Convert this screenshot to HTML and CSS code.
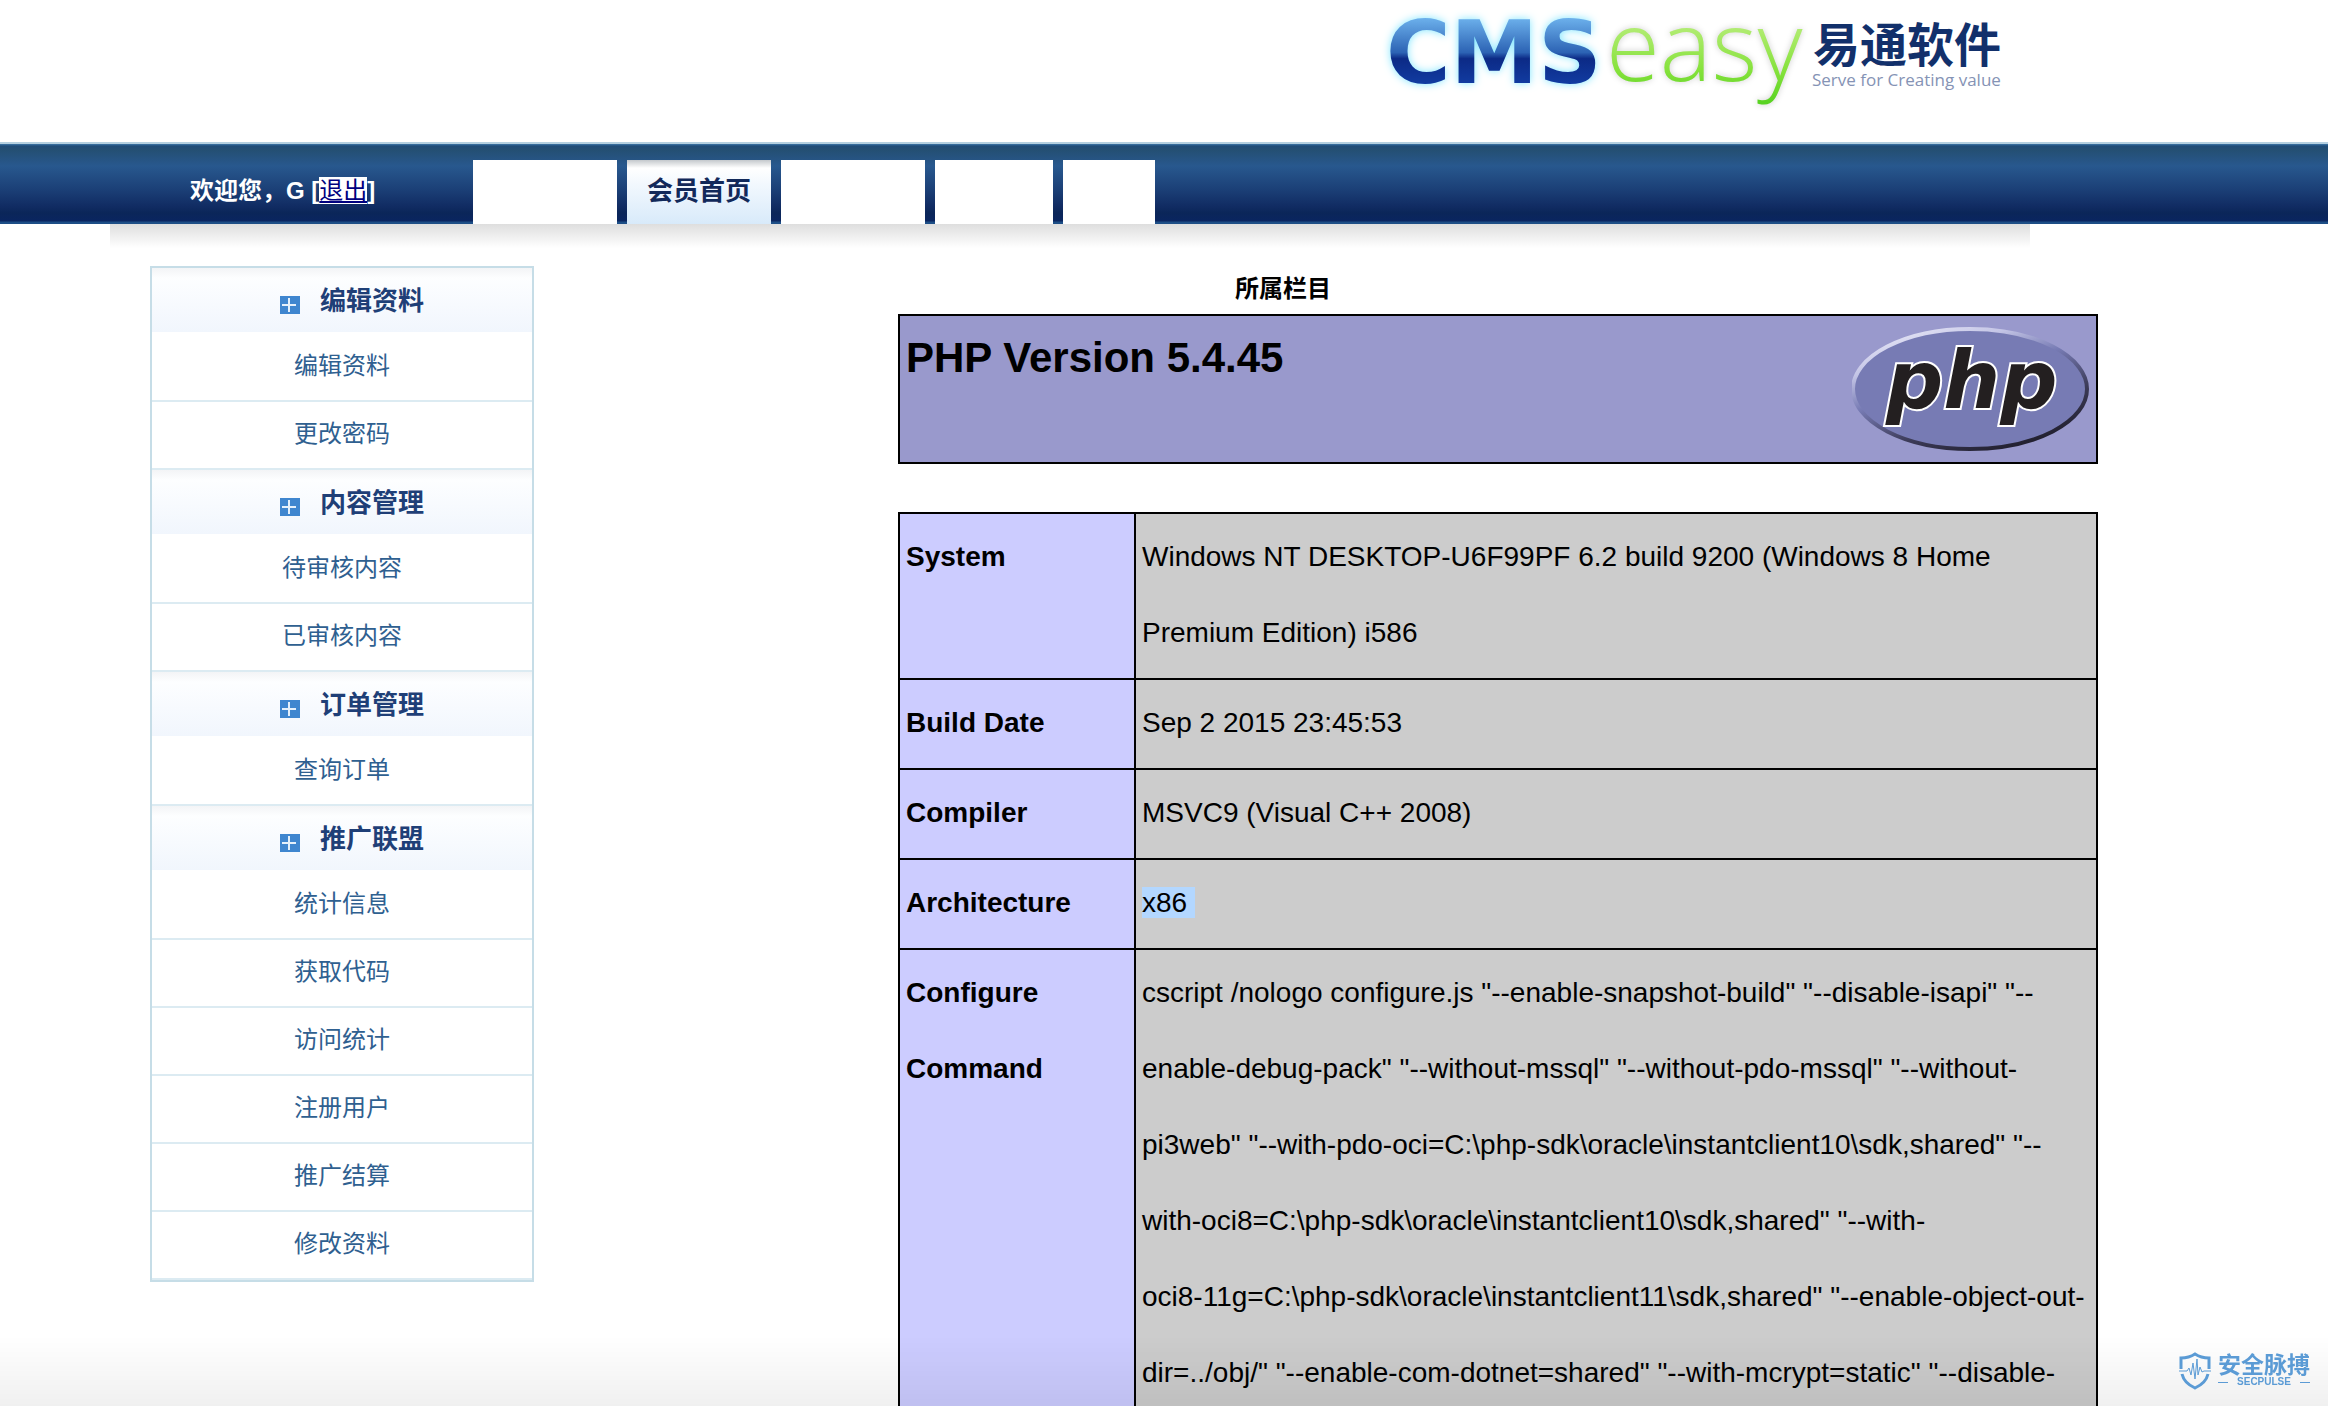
FILE: index.html
```html
<!DOCTYPE html>
<html lang="zh-CN">
<head>
    <meta charset="UTF-8">
    <meta name="viewport" content="width=device-width, initial-scale=1.0">
    <title>会员首页</title>
    <link rel="stylesheet" href="styles.css">
</head>
<body>
    <header class="header">
        <svg class="logo" viewBox="0 0 640 112" role="img" aria-label="CMSeasy 易通软件">
            <defs>
                <linearGradient id="blue" x1="0" y1="0" x2="0" y2="1">
                    <stop offset="0.15" stop-color="#6fb4ee"/>
                    <stop offset="0.5" stop-color="#2c63b4"/>
                    <stop offset="0.56" stop-color="#0c2a86"/>
                    <stop offset="0.85" stop-color="#123fa6"/>
                </linearGradient>
                <linearGradient id="green" x1="0" y1="0" x2="0" y2="1">
                    <stop offset="0.25" stop-color="#c4f08a"/>
                    <stop offset="0.7" stop-color="#86e23c"/>
                    <stop offset="1" stop-color="#4fd01c"/>
                </linearGradient>
            </defs>
            <text class="logo-cms" x="-2" y="83" fill="url(#blue)">CMS</text>
            <text class="logo-easy" x="218" y="81" fill="url(#green)">easy</text>
            <text class="logo-cn" x="425" y="62">易通软件</text>
            <text class="logo-slogan" x="424" y="86">Serve for Creating value</text>
        </svg>
    </header>

    <nav class="nav">
        <div class="welcome">欢迎您，G [<a href="#">退出</a>]</div>
        <ul class="tabs">
            <li class="tab"></li>
            <li class="tab active"><a href="#">会员首页</a></li>
            <li class="tab"></li>
            <li class="tab tab-medium"></li>
            <li class="tab tab-small"></li>
        </ul>
    </nav>
    <div class="nav-shadow"></div>

    <div class="page">
        <aside class="sidebar">
            <h3><svg class="plus" viewBox="0 0 20 18"><path d="M0 0h20v18H0z" fill="#3f86cf"/><path d="M9 2v14M2 9h14" stroke="#e4f0fb" stroke-width="2"/></svg>编辑资料</h3>
            <ul>
                <li><a href="#">编辑资料</a></li>
                <li><a href="#">更改密码</a></li>
            </ul>
            <h3><svg class="plus" viewBox="0 0 20 18"><path d="M0 0h20v18H0z" fill="#3f86cf"/><path d="M9 2v14M2 9h14" stroke="#e4f0fb" stroke-width="2"/></svg>内容管理</h3>
            <ul>
                <li><a href="#">待审核内容</a></li>
                <li><a href="#">已审核内容</a></li>
            </ul>
            <h3><svg class="plus" viewBox="0 0 20 18"><path d="M0 0h20v18H0z" fill="#3f86cf"/><path d="M9 2v14M2 9h14" stroke="#e4f0fb" stroke-width="2"/></svg>订单管理</h3>
            <ul>
                <li><a href="#">查询订单</a></li>
            </ul>
            <h3><svg class="plus" viewBox="0 0 20 18"><path d="M0 0h20v18H0z" fill="#3f86cf"/><path d="M9 2v14M2 9h14" stroke="#e4f0fb" stroke-width="2"/></svg>推广联盟</h3>
            <ul>
                <li><a href="#">统计信息</a></li>
                <li><a href="#">获取代码</a></li>
                <li><a href="#">访问统计</a></li>
                <li><a href="#">注册用户</a></li>
                <li><a href="#">推广结算</a></li>
                <li><a href="#">修改资料</a></li>
            </ul>
        </aside>

        <main class="content">
            <div class="column-title">所属栏目</div>
            <div class="php-head">
                <h1>PHP Version 5.4.45</h1>
                <svg class="php-logo" viewBox="0 0 240 134" role="img" aria-label="php">
                    <defs>
                        <linearGradient id="rim" x1="0.2" y1="0" x2="0.8" y2="1">
                            <stop offset="0" stop-color="#e6e6f6"/>
                            <stop offset="0.2" stop-color="#c4c5e6"/>
                            <stop offset="0.42" stop-color="#777bb4"/>
                            <stop offset="0.7" stop-color="#3c3b58"/>
                            <stop offset="1" stop-color="#1c1a26"/>
                        </linearGradient>
                    </defs>
                    <ellipse cx="118" cy="69" rx="117" ry="60" fill="#777bb4" stroke="url(#rim)" stroke-width="4"/>
                    <text class="php-text" x="34" y="88">php</text>
                </svg>
            </div>

            <table class="info">
                <tr>
                    <th scope="row">System</th>
                    <td>Windows NT DESKTOP-U6F99PF 6.2 build 9200 (Windows 8 Home Premium Edition) i586</td>
                </tr>
                <tr>
                    <th scope="row">Build Date</th>
                    <td>Sep 2 2015 23:45:53</td>
                </tr>
                <tr>
                    <th scope="row">Compiler</th>
                    <td>MSVC9 (Visual C++ 2008)</td>
                </tr>
                <tr>
                    <th scope="row">Architecture</th>
                    <td><span class="selected">x86 </span></td>
                </tr>
                <tr>
                    <th scope="row">Configure Command</th>
                    <td>cscript /nologo configure.js "--enable-snapshot-build" "--disable-isapi" "--<br>enable-debug-pack" "--without-mssql" "--without-pdo-mssql" "--without-<br>pi3web" "--with-pdo-oci=C:\php-sdk\oracle\instantclient10\sdk,shared" "--<br>with-oci8=C:\php-sdk\oracle\instantclient10\sdk,shared" "--with-<br>oci8-11g=C:\php-sdk\oracle\instantclient11\sdk,shared" "--enable-object-out-<br>dir=../obj/" "--enable-com-dotnet=shared" "--with-mcrypt=static" "--disable-</td>
                </tr>
            </table>
        </main>
    </div>

    <div class="bottom-fade"></div>
    <div class="watermark">
        <svg class="shield" viewBox="0 0 32 38">
            <path d="M2 17V6Q10 6 16 2Q22 6 30 6V17M3 22Q5 31 16 36Q27 31 29 22" fill="none" stroke="#5b9bd5" stroke-width="3"/>
            <path d="M0 19h8l2-3 2 7 2-12 2 16 2-20 1 16 2-8 2 5 2-1h7" fill="none" stroke="#5b9bd5" stroke-width="1"/>
        </svg>
        <div class="watermark-text">
            <div class="watermark-cn">安全脉搏</div>
            <div class="watermark-en">SECPULSE</div>
        </div>
    </div>
</body>
</html>
```
FILE: styles.css
```css
* {
    box-sizing: border-box;
}
body {
    margin: 0;
    height: 100vh;
    overflow: hidden;
    background-color: #fff;
    color: #000;
    font-family: "Liberation Sans", "Noto Sans CJK SC", sans-serif;
    font-size: 24px;
}
ul {
    margin: 0;
    padding: 0;
    list-style: none;
}
a {
    text-decoration: none;
}

/* header */
.header {
    display: flex;
    justify-content: flex-end;
    height: 142px;
    padding-right: 300px;
}
.logo {
    width: 640px;
    height: 112px;
    overflow: visible;
}
.logo-cms {
    font: bold 88px "DejaVu Sans", sans-serif;
    filter: drop-shadow(0 0 4px #7fe6ff);
}
.logo-easy {
    font: 300 98px "Open Sans", sans-serif;
    filter: drop-shadow(0 0 3px #ccc);
}
.logo-cn {
    font: bold 47px "Noto Sans CJK SC", sans-serif;
    fill: #12306b;
}
.logo-slogan {
    font: 17px "Open Sans", sans-serif;
    fill: #8593b5;
}

/* navigation */
.nav {
    display: flex;
    align-items: flex-end;
    height: 82px;
    padding-left: 190px;
    border-top: 2px solid #b4cfe0;
    background: linear-gradient(#3d76a8 0, #1f4b78 2px, #244f73 6px, #28588e 22px, #1b3f76 46px, #112c63 62px, #0b2659 69px, #0a2560 77px, #1d4e86 78px);
}
.welcome {
    width: 283px;
    line-height: 66px;
    font-weight: bold;
    color: #fff;
}
.welcome a {
    background-color: #fff;
    color: #00007f;
    font-weight: normal;
    text-decoration: underline;
}
.tabs {
    display: flex;
    gap: 10px;
}
.tab {
    width: 144px;
    height: 64px;
    background-color: #fff;
    text-align: center;
}
.tab-medium {
    width: 118px;
}
.tab-small {
    width: 92px;
}
.tab.active {
    background: linear-gradient(#c4c8cc 0, #fff 8px, #f2f8fe 24px, #d8eafa 100%);
}
.tab a {
    font-size: 26px;
    font-weight: bold;
    line-height: 62px;
    color: #12295a;
}
.nav-shadow {
    height: 24px;
    margin: 0 298px 0 110px;
    background: linear-gradient(#dedede, #fff);
}

/* page */
.page {
    display: flex;
    justify-content: space-between;
    align-items: flex-start;
    padding: 18px 230px 0 150px;
}
.sidebar {
    width: 384px;
    border: 2px solid #c6dde7;
    text-align: center;
}
.sidebar h3 {
    display: flex;
    justify-content: center;
    align-items: center;
    gap: 20px;
    height: 66px;
    margin: 0;
    padding: 0 0 6px 20px;
    background: linear-gradient(#f3f4f6 0, #fdfeff 10px, #f1f6fd 100%) no-repeat 0 0 / 100% 64px;
    font-size: 26px;
    color: #1f3f77;
}
.plus {
    width: 20px;
    height: 18px;
    margin-top: 14px;
}
.sidebar li {
    height: 68px;
    border-bottom: 2px solid #dcebf2;
    line-height: 64px;
}
.sidebar li a {
    color: #2f6090;
}

/* phpinfo */
.content {
    width: 1200px;
}
.column-title {
    width: 770px;
    height: 48px;
    line-height: 46px;
    text-align: center;
    font-weight: bold;
}
.php-head {
    display: flex;
    justify-content: space-between;
    height: 150px;
    margin-bottom: 48px;
    padding: 4px 4px 4px 6px;
    border: 2px solid #000;
    background-color: #9999cc;
}
.php-head h1 {
    margin: 0;
    font-size: 42px;
    line-height: 76px;
}
.php-logo {
    width: 240px;
    height: 134px;
}
.php-text {
    font: italic bold 80px "DejaVu Sans", sans-serif;
    fill: #231f20;
    stroke: #fff;
    stroke-width: 4px;
    paint-order: stroke;
}
.info {
    width: 100%;
    border-collapse: collapse;
    table-layout: fixed;
    font-size: 28px;
    line-height: 76px;
}
.info th,
.info td {
    padding: 5px 6px 7px;
    border: 2px solid #000;
    text-align: left;
    vertical-align: top;
}
.info th {
    width: 236px;
    background-color: #ccccff;
}
.info td {
    background-color: #cccccc;
}
.selected {
    background-color: #b3d7ff;
    white-space: pre;
}

/* watermark */
.bottom-fade {
    position: fixed;
    right: 0;
    bottom: 0;
    left: 0;
    height: 70px;
    background: linear-gradient(rgba(0, 0, 0, 0), rgba(0, 0, 0, 0.06));
}
.watermark {
    position: fixed;
    right: 18px;
    bottom: 16px;
    display: flex;
    align-items: center;
    gap: 7px;
    color: #5b9bd5;
}
.shield {
    width: 32px;
    height: 38px;
}
.watermark-cn {
    font-size: 23px;
    font-weight: bold;
    line-height: 22px;
}
.watermark-en {
    display: flex;
    align-items: center;
    justify-content: space-between;
    font-size: 10px;
    font-weight: bold;
    line-height: 12px;
}
.watermark-en::before,
.watermark-en::after {
    content: "";
    width: 10px;
    height: 1px;
    background-color: #5b9bd5;
}
```
